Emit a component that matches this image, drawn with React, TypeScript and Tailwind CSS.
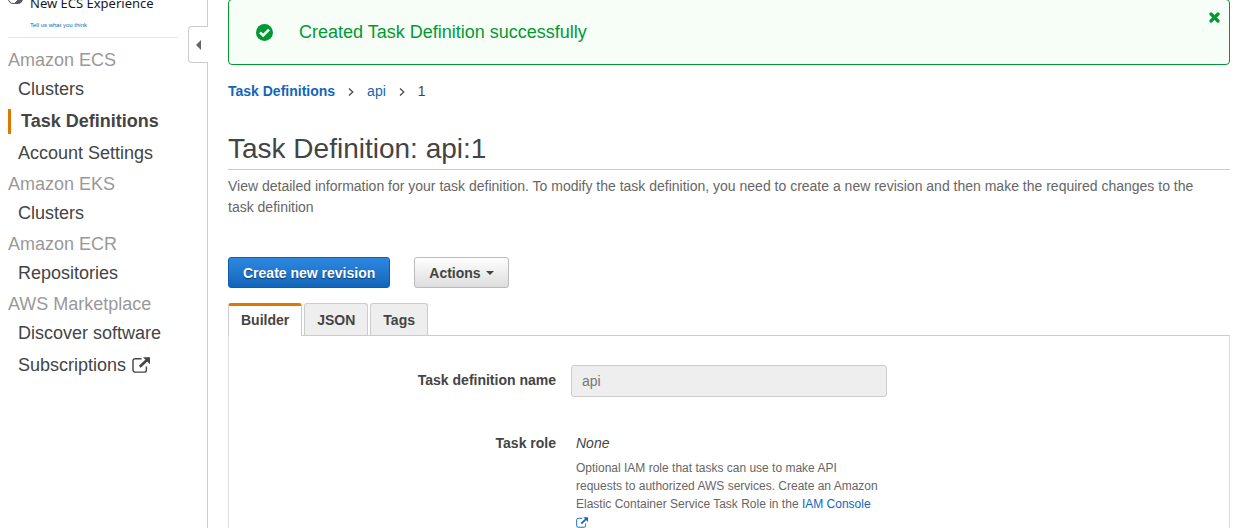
import { useState } from "react";
import type { ReactNode } from "react";

type NavItem = { label: string; active?: boolean; external?: boolean };
type NavSection = { title: string; items: NavItem[] };

const sections: NavSection[] = [
  {
    title: "Amazon ECS",
    items: [
      { label: "Clusters" },
      { label: "Task Definitions", active: true },
      { label: "Account Settings" },
    ],
  },
  { title: "Amazon EKS", items: [{ label: "Clusters" }] },
  { title: "Amazon ECR", items: [{ label: "Repositories" }] },
  {
    title: "AWS Marketplace",
    items: [{ label: "Discover software" }, { label: "Subscriptions", external: true }],
  },
];

const tabs = ["Builder", "JSON", "Tags"];

function ExternalIcon({ className }: { className: string }) {
  return (
    <svg viewBox="0 0 18 16" fill="none" className={className} aria-hidden="true">
      <path
        d="M9.5 1.7H3.2A2.2 2.2 0 0 0 1 3.9v9A2.2 2.2 0 0 0 3.2 15.1h9a2.2 2.2 0 0 0 2.2-2.2V9.5"
        stroke="currentColor"
        strokeWidth="1.4"
      />
      <path d="M7.8 9.8L15 3" stroke="currentColor" strokeWidth="2.6" />
      <path d="M11 0.3H18V7.3z" fill="currentColor" />
    </svg>
  );
}

function Angle() {
  return (
    <svg viewBox="0 0 6 10" fill="none" className="h-[10px] w-[6px]" aria-hidden="true">
      <path d="M1 1.5L4.8 5L1 8.500" stroke="currentColor" strokeWidth="1.2" />
    </svg>
  );
}

function Sidebar() {
  return (
    <aside className="relative w-52 shrink-0 border-r border-[#ccc] pl-2">
      <div className="mr-[29px] border-b border-[#e5e5e5] pb-[7px]">
        <div className="-mt-1.5 flex items-start">
          <input
            id="experience"
            type="checkbox"
            className="h-[10px] w-[15px] appearance-none rounded-full border border-[#545b64] bg-[#545b64] bg-[radial-gradient(circle_at_4px_50%,#fff_4px,#545b64_4px)]"
          />
          <label
            htmlFor="experience"
            className="pl-[7px] font-['Noto_Sans',sans-serif] text-[13px] leading-[18px] whitespace-nowrap text-[#16191f]"
          >
            New ECS Experience
          </label>
        </div>
        <a
          href="#feedback"
          className="mt-[9px] ml-[22px] block text-[6px] leading-[9px] text-[#0073bb]"
        >
          Tell us what you think
        </a>
      </div>
      <nav className="pt-[9px] text-lg text-[#444]" aria-label="Services">
        {sections.map((section) => (
          <section key={section.title} className="pb-0.5">
            <h2 className="leading-[26px] text-[#999]">{section.title}</h2>
            <ul>
              {section.items.map((item) => (
                <li key={item.label} className="flex h-8 items-center">
                  <a
                    href="#nav"
                    className={
                      item.active
                        ? "flex items-center border-l-3 border-[#e07700] pl-[10px] leading-[25px] font-bold"
                        : "flex items-center pl-[10px] leading-[25px]"
                    }
                  >
                    {item.label}
                    {item.external && <ExternalIcon className="ml-1.5 h-4 w-[18px]" />}
                  </a>
                </li>
              ))}
            </ul>
          </section>
        ))}
      </nav>
      <button
        type="button"
        aria-label="Collapse navigation"
        className="absolute top-[26px] -right-px flex h-[37px] w-5 items-center rounded-l border border-r-0 border-[#ccc] bg-white pl-[7px]"
      >
        <svg viewBox="0 0 5 10" className="h-[10px] w-[5px] fill-[#666]" aria-hidden="true">
          <path d="M5 0v10L0 5z" />
        </svg>
      </button>
    </aside>
  );
}

function Alert() {
  return (
    <div
      role="status"
      className="relative -mt-px flex h-[66px] shrink-0 items-center rounded border border-[#093] bg-[#f6fef7] pl-[27px] text-[#093]"
    >
      <svg viewBox="0 0 17 17" className="h-[17px] w-[17px]" aria-hidden="true">
        <circle cx="8.5" cy="8.5" r="8.5" fill="currentColor" />
        <path d="M4 8.400L7.200 11.500L13 5.700" fill="none" stroke="#f6fef7" strokeWidth="2.6" />
      </svg>
      <p className="pl-[26px] text-lg">Created Task Definition successfully</p>
      <button
        type="button"
        aria-label="Dismiss"
        className="absolute top-3 right-[9px] flex"
      >
        <svg viewBox="0 0 11 11" className="h-[11px] w-[11px]" aria-hidden="true">
          <path
            d="M2 2L9 9M9 2L2 9"
            stroke="currentColor"
            strokeWidth="3.2"
            strokeLinecap="round"
          />
        </svg>
      </button>
    </div>
  );
}

function Row({ label, children }: { label: ReactNode; children: ReactNode }) {
  return (
    <div className="grid grid-cols-[minmax(0,327px)_minmax(0,316px)] gap-x-[15px]">
      <div className="text-right font-bold">{label}</div>
      <div>{children}</div>
    </div>
  );
}

export default function App() {
  const [tab, setTab] = useState("Builder");
  return (
    <div className="flex h-screen overflow-hidden bg-white font-['Liberation_Sans',Arial,sans-serif] text-sm leading-[21px] text-[#444]">
      <Sidebar />
      <main className="flex min-w-0 flex-1 flex-col pr-[29px] pl-5">
        <Alert />
        <nav aria-label="Breadcrumb" className="mt-4 flex items-center gap-[13px]">
          <a href="#definitions" className="font-bold text-[#1166bb]">
            Task Definitions
          </a>
          <Angle />
          <a href="#api" className="text-[#1166bb]">
            api
          </a>
          <Angle />
          <span>1</span>
        </nav>
        <h1 className="mt-[27px] border-b border-[#ccc] text-[28px] leading-[40px]">
          Task Definition: api:1
        </h1>
        <p className="mt-1.5 pr-3 text-[#666]">
          View detailed information for your task definition. To modify the task definition, you
          need to create a new revision and then make the required changes to the task definition
        </p>
        <div className="mt-[39px] flex gap-6 font-bold">
          <button
            type="button"
            className="h-[31px] rounded-[3px] border border-[#0f5cac] bg-linear-to-b from-[#2e88e0] to-[#1166bb] px-[14px] pt-px text-white text-shadow-[0_1px_1px_#00000080]"
          >
            Create new revision
          </button>
          <button
            type="button"
            className="flex h-[31px] items-center gap-[5px] rounded-[3px] border border-[#bbb] bg-linear-to-b from-white to-[#ddd] px-[14px] pt-px"
          >
            Actions
            <svg viewBox="0 0 8 4" className="h-1 w-2 fill-current" aria-hidden="true">
              <path d="M0 0h8L4 4z" />
            </svg>
          </button>
        </div>
        <div role="tablist" className="mt-[15px] flex gap-0.5 font-bold">
          {tabs.map((name) => (
            <button
              key={name}
              type="button"
              role="tab"
              aria-selected={tab === name}
              onClick={() => setTab(name)}
              className={
                tab === name
                  ? "z-10 -mb-px h-[33px] rounded-t-[3px] border border-t-3 border-b-0 border-[#ccc] border-t-[#e07700] bg-white px-3 pb-0.5"
                  : "h-8 rounded-t-[3px] border border-b-0 border-[#ccc] bg-[#eee] px-3 pt-0.5"
              }
            >
              {name}
            </button>
          ))}
        </div>
        <div
          role="tabpanel"
          className="flex-1 border-x border-t border-[#ddd] border-t-[#ccc] pt-[29px]"
        >
          <Row
            label={
              <label htmlFor="name" className="leading-[30px]">
                Task definition name
              </label>
            }
          >
            <input
              id="name"
              type="text"
              defaultValue="api"
              disabled
              className="block h-8 w-full rounded-[3px] border border-[#ccc] bg-[#eee] px-[10px] text-[#777]"
            />
          </Row>
          <div className="mt-9">
            <Row label="Task role">
              <div className="px-[5px]">
                <p className="italic">None</p>
                <p className="mt-[5px] text-xs leading-[18px] text-[#666]">
                  Optional IAM role that tasks can use to make API requests to authorized AWS
                  services. Create an Amazon Elastic Container Service Task Role in the{" "}
                  <a href="#iam" className="text-[#1166bb]">
                    IAM Console <ExternalIcon className="inline-block h-[11px] w-3 align-[-2px]" />
                  </a>
                </p>
              </div>
            </Row>
          </div>
        </div>
      </main>
    </div>
  );
}
